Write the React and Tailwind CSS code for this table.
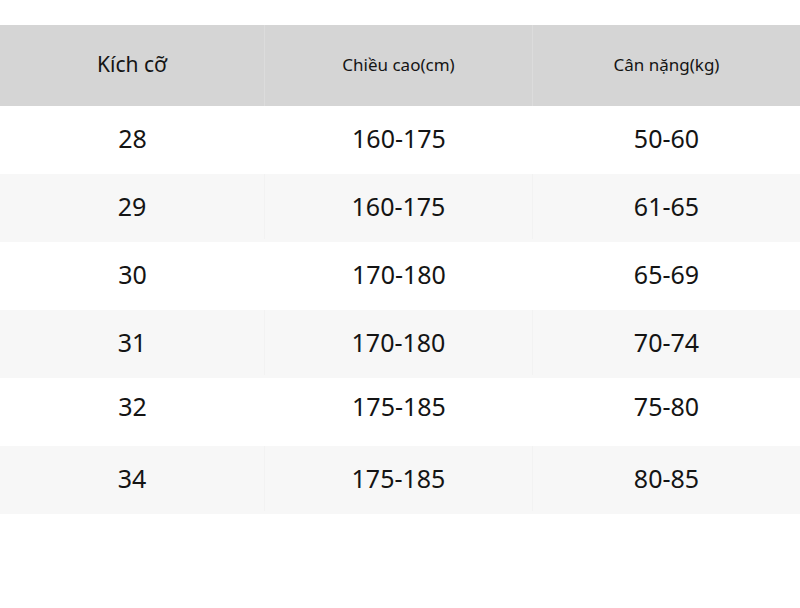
export default function App() {
  const rows = [
    ["28", "160-175", "50-60"],
    ["29", "160-175", "61-65"],
    ["30", "170-180", "65-69"],
    ["31", "170-180", "70-74"],
    ["32", "175-185", "75-80"],
    ["34", "175-185", "80-85"],
  ];
  return (
    <div
      className="w-[800px] h-[608px] bg-white pt-[25px] text-[#141414]"
      style={{ fontFamily: '"Noto Sans", "Open Sans", sans-serif' }}
    >
      <div className="grid grid-cols-[265px_268px_267px] h-[81px] bg-[#d5d5d5]">
        <div className="flex items-center justify-center text-[21px] pb-[2px] border-r border-[#dcdcdc]">Kích cỡ</div>
        <div className="flex items-center justify-center text-[17px] pb-[2px] border-r border-[#dcdcdc]">Chiều cao(cm)</div>
        <div className="flex items-center justify-center text-[17px] pb-[2px]">Cân nặng(kg)</div>
      </div>
      {rows.map((r, i) => (
        <div
          key={i}
          className={
            "grid grid-cols-[265px_268px_267px] h-[68px] text-[25px] " +
            (i === 4 ? "pb-[11px] " : "pb-[3px] ") +
            (i % 2 === 1 ? "bg-[#f7f7f7]" : "bg-white")
          }
        >
          <div className={"flex items-center justify-center " + (i % 2 === 1 ? "border-r border-[#f2f2f2]" : "")}>{r[0]}</div>
          <div className={"flex items-center justify-center " + (i % 2 === 1 ? "border-r border-[#f2f2f2]" : "")}>{r[1]}</div>
          <div className="flex items-center justify-center">{r[2]}</div>
        </div>
      ))}
    </div>
  );
}
